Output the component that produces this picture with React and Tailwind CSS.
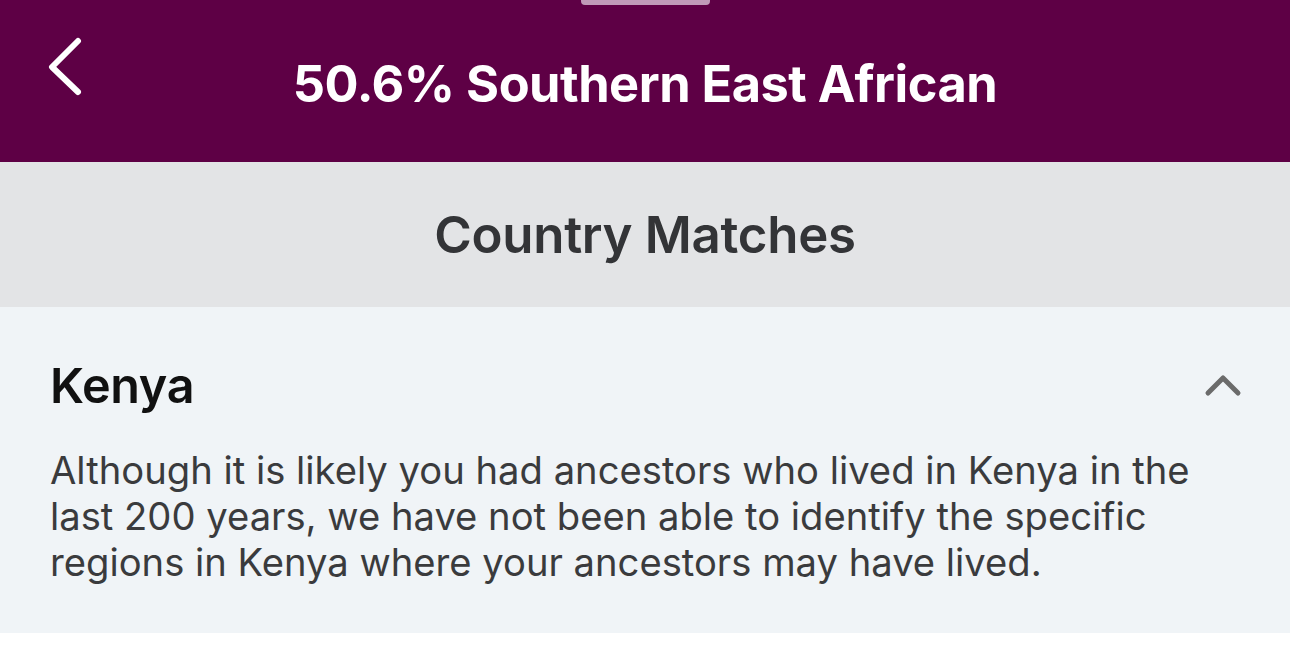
import React from 'react';

const font = { fontFamily: 'Inter, "Noto Sans", sans-serif' };

function BackChevron() {
  return (
    <svg width="40" height="60" viewBox="0 0 40 60" fill="none" className="absolute left-[44px] top-[36px]">
      <polyline points="34,5 8,31 34,56" stroke="#fff" strokeWidth="6" strokeLinecap="round" strokeLinejoin="round" />
    </svg>
  );
}

function UpChevron() {
  return (
    <svg width="40" height="24" viewBox="0 0 40 24" fill="none">
      <polyline points="4,19 19,4 34,19" stroke="#6b6b6b" strokeWidth="5" strokeLinecap="round" strokeLinejoin="round" />
    </svg>
  );
}

export default function App() {
  return (
    <div className="w-[1290px] h-[650px] bg-white overflow-hidden" style={font}>
      <header className="relative h-[162px] bg-[#5e0045] flex items-center justify-center">
        <div className="absolute top-0 left-[581px] w-[129px] h-[5px] rounded-b-[4px] bg-[#c09ab8]" />
        <BackChevron />
        <h1 className="text-white text-[50.5px] font-bold tracking-[-0.5px] mt-[6px]">50.6% Southern East African</h1>
      </header>

      <div className="h-[145px] bg-[#e3e4e6] flex items-center justify-center">
        <h2 className="text-[#333437] text-[51px] font-semibold tracking-[-0.3px] mt-[2px]">Country Matches</h2>
      </div>

      <section className="h-[326px] bg-[#f0f4f7] px-[50px] pt-[51px]">
        <div className="flex items-center justify-between">
          <h3 className="text-[#111] text-[48.5px] font-semibold leading-[56px] tracking-[-0.3px]">Kenya</h3>
          <div className="mr-[-4px]">
            <UpChevron />
          </div>
        </div>
        <p className="mt-[33px] text-[#3a3b3d] text-[38.2px] leading-[46px]">
          Although it is likely you had ancestors who lived in Kenya in the last 200 years, we have not been able to identify the specific regions in Kenya where your ancestors may have lived.
        </p>
      </section>
    </div>
  );
}
